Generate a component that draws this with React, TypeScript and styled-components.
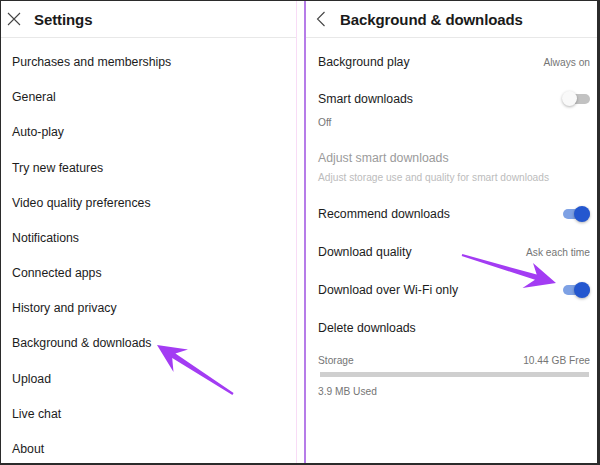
import React from "react";
import styled, { createGlobalStyle } from "styled-components";

const Global = createGlobalStyle`
  html, body { margin: 0; padding: 0; background: #fff; }
  body { font-family: "Liberation Sans", Arial, sans-serif; color: #1c1c1c; }
  * { box-sizing: border-box; }
`;

const Frame = styled.div`
  position: relative;
  width: 600px;
  height: 465px;
  display: flex;
  column-gap: 7px;
  background: #fff;
  border-style: solid;
  border-color: #2b2b2b;
  border-width: 1px 3px 2px 1px;
  overflow: hidden;
`;

const LeftPanel = styled.section`
  width: 296px;
  flex: none;
  display: flex;
  flex-direction: column;
  border-right: 1px solid #f8dcf6;
`;

const RightPanel = styled.section`
  flex: 1;
  display: flex;
  flex-direction: column;
  border-left: 2px solid #b67ce8;
`;

const Header = styled.header<{ $pad: number; $gap: number }>`
  height: 37px;
  flex: none;
  display: flex;
  align-items: center;
  padding-left: ${(p) => p.$pad}px;
  gap: ${(p) => p.$gap}px;
  border-bottom: 1px solid #e8e8e8;
`;

const Title = styled.h1`
  margin: 0;
  font-size: 15px;
  font-weight: 700;
  color: #1a1a1a;
  letter-spacing: -0.1px;
`;

const IconBox = styled.span`
  display: inline-flex;
  width: 14px;
  height: 16px;
  align-items: center;
  justify-content: center;
  color: #444;
`;

const MenuList = styled.ul`
  list-style: none;
  margin: 0;
  padding: 6.4px 0 0 0;
`;

const MenuItem = styled.li`
  height: 35.2px;
  display: flex;
  align-items: center;
  padding-left: 11px;
  font-size: 12.3px;
  color: #1c1c1c;
`;

const Rows = styled.div`
  padding: 5px 7px 0 12px;
  display: flex;
  flex-direction: column;
`;

const Row = styled.div<{ $h: number; $gap?: number }>`
  height: ${(p) => p.$h}px;
  display: flex;
  flex-direction: column;
  justify-content: center;
  gap: ${(p) => p.$gap ?? 0}px;
`;

const Line = styled.div`
  display: flex;
  align-items: center;
  justify-content: space-between;
  height: 16px;
`;

const Label = styled.span<{ $disabled?: boolean }>`
  font-size: 12.3px;
  line-height: 16px;
  color: ${(p) => (p.$disabled ? "#9b9b9b" : "#1c1c1c")};
`;

const Sub = styled.span<{ $disabled?: boolean }>`
  font-size: 10.2px;
  line-height: 12px;
  color: ${(p) => (p.$disabled ? "#bcbcbc" : "#757575")};
`;

const Value = styled.span`
  font-size: 10.2px;
  color: #757575;
`;

const Toggle = styled.span<{ $on: boolean }>`
  position: relative;
  width: 28px;
  height: 16px;
  flex: none;
  &::before {
    content: "";
    position: absolute;
    left: 1px;
    right: 0;
    top: 3px;
    height: 10px;
    border-radius: 5px;
    background: ${(p) => (p.$on ? "#7ea1e4" : "#c2c2c2")};
  }
  &::after {
    content: "";
    position: absolute;
    top: ${(p) => (p.$on ? "0" : "0.5px")};
    left: ${(p) => (p.$on ? "12px" : "0")};
    width: ${(p) => (p.$on ? "16px" : "15px")};
    height: ${(p) => (p.$on ? "16px" : "15px")};
    border-radius: 50%;
    background: ${(p) => (p.$on ? "#2457cf" : "#f9f9f9")};
    box-shadow: 0 1px 3px rgba(0, 0, 0, 0.3);
  }
`;

const Storage = styled.div`
  display: flex;
  flex-direction: column;
  padding-top: 8px;
`;

const StorageHead = styled.div`
  display: flex;
  justify-content: space-between;
  font-size: 10.2px;
  line-height: 14px;
  color: #757575;
`;

const Bar = styled.div`
  height: 5px;
  margin: 4px 1px 0 2px;
  background: #cfcfcf;
`;

const Used = styled.div`
  margin-top: 9px;
  font-size: 10.2px;
  line-height: 12px;
  color: #757575;
`;

const Overlay = styled.svg`
  position: absolute;
  left: -1px;
  top: -1px;
  pointer-events: none;
`;

const leftItems = [
  "Purchases and memberships",
  "General",
  "Auto-play",
  "Try new features",
  "Video quality preferences",
  "Notifications",
  "Connected apps",
  "History and privacy",
  "Background & downloads",
  "Upload",
  "Live chat",
  "About",
];

export default function App() {
  return (
    <>
      <Global />
      <Frame>
        <LeftPanel>
          <Header $pad={6} $gap={13}>
            <IconBox>
              <svg width="14" height="14" viewBox="0 0 14 14">
                <path d="M1 1 L13 13 M13 1 L1 13" stroke="#444" strokeWidth="1.1" fill="none" />
              </svg>
            </IconBox>
            <Title>Settings</Title>
          </Header>
          <MenuList>
            {leftItems.map((t) => (
              <MenuItem key={t}>{t}</MenuItem>
            ))}
          </MenuList>
        </LeftPanel>
        <RightPanel>
          <Header $pad={8} $gap={12}>
            <IconBox>
              <svg width="10" height="16" viewBox="0 0 10 16">
                <path d="M8.5 1 L1.5 8 L8.5 15" stroke="#444" strokeWidth="1.1" fill="none" />
              </svg>
            </IconBox>
            <Title>Background &amp; downloads</Title>
          </Header>
          <Rows>
            <Row $h={38}>
              <Line>
                <Label>Background play</Label>
                <Value>Always on</Value>
              </Line>
            </Row>
            <Row $h={57} $gap={10}>
              <Line>
                <Label>Smart downloads</Label>
                <Toggle $on={false} />
              </Line>
              <Sub>Off</Sub>
            </Row>
            <Row $h={57} $gap={6}>
              <Line>
                <Label $disabled>Adjust smart downloads</Label>
              </Line>
              <Sub $disabled>Adjust storage use and quality for smart downloads</Sub>
            </Row>
            <Row $h={38}>
              <Line>
                <Label>Recommend downloads</Label>
                <Toggle $on />
              </Line>
            </Row>
            <Row $h={38}>
              <Line>
                <Label>Download quality</Label>
                <Value>Ask each time</Value>
              </Line>
            </Row>
            <Row $h={38}>
              <Line>
                <Label>Download over Wi-Fi only</Label>
                <Toggle $on />
              </Line>
            </Row>
            <Row $h={37}>
              <Line>
                <Label>Delete downloads</Label>
              </Line>
            </Row>
            <Storage>
              <StorageHead>
                <span>Storage</span>
                <span>10.44 GB Free</span>
              </StorageHead>
              <Bar />
              <Used>3.9 MB Used</Used>
            </Storage>
          </Rows>
        </RightPanel>
        <Overlay width="600" height="465" viewBox="0 0 600 465">
          <polygon
            fill="#a33cf3"
            points="233.6,393.1 175.4,353.5 188,349.5 157,345 173.5,372 172.2,358.1 232.4,394.9"
          />
          <polygon
            fill="#a33cf3"
            points="462.3,254 536.7,274.6 533,263 556,283 522.5,288 535,279.8 461.7,256"
          />
        </Overlay>
      </Frame>
    </>
  );
}
